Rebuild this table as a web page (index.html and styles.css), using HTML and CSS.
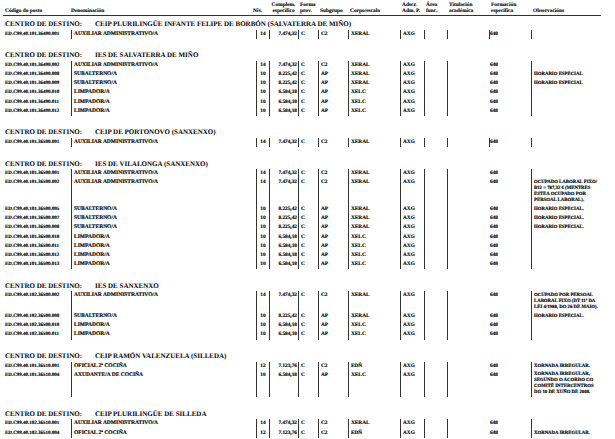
FILE: index.html
```html
<!DOCTYPE html>
<html lang="gl">
<head>
<meta charset="utf-8">
<title>Postos</title>
<link rel="stylesheet" href="styles.css">
</head>
<body>
<div class="page">
  <div class="head cols">
    <div class="h"><span></span><span>Código do posto</span></div>
    <div class="h"><span></span><span>Denominación</span></div>
    <div class="h hn"><span></span><span>Niv.</span></div>
    <div class="h hc"><span>Complem.</span><span>específico</span></div>
    <div class="h hp"><span>Forma</span><span>prov.</span></div>
    <div class="h hp"><span></span><span>Subgrupo</span></div>
    <div class="h hp"><span></span><span>Corpo/escala</span></div>
    <div class="h hp"><span>Adscr.</span><span>Adm. P.</span></div>
    <div class="h hp"><span>Área</span><span>func.</span></div>
    <div class="h hp"><span>Titulación</span><span>académica</span></div>
    <div class="h hp"><span>Formación</span><span>específica</span></div>
    <div class="h hp"><span></span><span>Observacións</span></div>
  </div>

  <section class="sec first fbar">
    <h2 class="title"><span class="lbl">CENTRO DE DESTINO:</span>CEIP PLURILINGÜE INFANTE FELIPE DE BORBÓN (SALVATERRA DE MIÑO)</h2>
    <div class="row cols"><div class="k">ED.C99.40.101.36490.001</div><div class="b d">AUXILIAR ADMINISTRATIVO/A</div><div class="b n">14</div><div class="b r">7.474,32</div><div class="b">C</div><div class="b">C2</div><div class="b">XERAL</div><div class="b">AXG</div><div class="b"></div><div class="b"></div><div class="f">648</div><div class="b o"></div></div>
  </section>

  <section class="sec">
    <h2 class="title"><span class="lbl">CENTRO DE DESTINO:</span>IES DE SALVATERRA DE MIÑO</h2>
    <div class="row cols"><div class="k">ED.C99.40.101.36490.002</div><div class="b d">AUXILIAR ADMINISTRATIVO/A</div><div class="b n">14</div><div class="b r">7.474,32</div><div class="b">C</div><div class="b">C2</div><div class="b">XERAL</div><div class="b">AXG</div><div class="b"></div><div class="b"></div><div class="f">648</div><div class="b o"></div></div>
    <div class="row cols"><div class="k">ED.C99.40.101.36490.008</div><div class="b d">SUBALTERNO/A</div><div class="b n">10</div><div class="b r">8.225,42</div><div class="b">C</div><div class="b">AP</div><div class="b">XERAL</div><div class="b">AXG</div><div class="b"></div><div class="b"></div><div class="f">648</div><div class="b o">HORARIO ESPECIAL</div></div>
    <div class="row cols"><div class="k">ED.C99.40.101.36490.009</div><div class="b d">SUBALTERNO/A</div><div class="b n">10</div><div class="b r">8.225,42</div><div class="b">C</div><div class="b">AP</div><div class="b">XERAL</div><div class="b">AXG</div><div class="b"></div><div class="b"></div><div class="f">648</div><div class="b o">HORARIO ESPECIAL</div></div>
    <div class="row cols"><div class="k">ED.C99.40.101.36490.010</div><div class="b d">LIMPADOR/A</div><div class="b n">10</div><div class="b r">6.584,18</div><div class="b">C</div><div class="b">AP</div><div class="b">XELC</div><div class="b">AXG</div><div class="b"></div><div class="b"></div><div class="f">648</div><div class="b o"></div></div>
    <div class="row cols"><div class="k">ED.C99.40.101.36490.011</div><div class="b d">LIMPADOR/A</div><div class="b n">10</div><div class="b r">6.584,18</div><div class="b">C</div><div class="b">AP</div><div class="b">XELC</div><div class="b">AXG</div><div class="b"></div><div class="b"></div><div class="f">648</div><div class="b o"></div></div>
    <div class="row cols"><div class="k">ED.C99.40.101.36490.012</div><div class="b d">LIMPADOR/A</div><div class="b n">10</div><div class="b r">6.584,18</div><div class="b">C</div><div class="b">AP</div><div class="b">XELC</div><div class="b">AXG</div><div class="b"></div><div class="b"></div><div class="f">648</div><div class="b o"></div></div>
  </section>

  <section class="sec fbar">
    <h2 class="title"><span class="lbl">CENTRO DE DESTINO:</span>CEIP DE PORTONOVO (SANXENXO)</h2>
    <div class="row cols"><div class="k">ED.C99.40.101.36500.001</div><div class="b d">AUXILIAR ADMINISTRATIVO/A</div><div class="b n">14</div><div class="b r">7.474,32</div><div class="b">C</div><div class="b">C2</div><div class="b">XERAL</div><div class="b">AXG</div><div class="b"></div><div class="b"></div><div class="f">648</div><div class="b o"></div></div>
  </section>

  <section class="sec">
    <h2 class="title"><span class="lbl">CENTRO DE DESTINO:</span>IES DE VILALONGA (SANXENXO)</h2>
    <div class="row cols"><div class="k">ED.C99.40.101.36500.001</div><div class="b d">AUXILIAR ADMINISTRATIVO/A</div><div class="b n">14</div><div class="b r">7.474,32</div><div class="b">C</div><div class="b">C2</div><div class="b">XERAL</div><div class="b">AXG</div><div class="b"></div><div class="b"></div><div class="f">648</div><div class="b o"></div></div>
    <div class="row cols"><div class="k">ED.C99.40.101.36500.002</div><div class="b d">AUXILIAR ADMINISTRATIVO/A</div><div class="b n">14</div><div class="b r">7.474,32</div><div class="b">C</div><div class="b">C2</div><div class="b">XERAL</div><div class="b">AXG</div><div class="b"></div><div class="b"></div><div class="f">648</div><div class="b o ml">OCUPADO LABORAL FIXO/<br>B12 = 787,32 € (MENTRES<br>ESTEA OCUPADO POR<br>PERSOAL LABORAL).</div></div>
    <div class="row cols"><div class="k">ED.C99.40.101.36500.005</div><div class="b d">SUBALTERNO/A</div><div class="b n">10</div><div class="b r">8.225,42</div><div class="b">C</div><div class="b">AP</div><div class="b">XERAL</div><div class="b">AXG</div><div class="b"></div><div class="b"></div><div class="f">648</div><div class="b o">HORARIO ESPECIAL.</div></div>
    <div class="row cols"><div class="k">ED.C99.40.101.36500.007</div><div class="b d">SUBALTERNO/A</div><div class="b n">10</div><div class="b r">8.225,42</div><div class="b">C</div><div class="b">AP</div><div class="b">XERAL</div><div class="b">AXG</div><div class="b"></div><div class="b"></div><div class="f">648</div><div class="b o">HORARIO ESPECIAL.</div></div>
    <div class="row cols"><div class="k">ED.C99.40.101.36500.008</div><div class="b d">SUBALTERNO/A</div><div class="b n">10</div><div class="b r">8.225,42</div><div class="b">C</div><div class="b">AP</div><div class="b">XERAL</div><div class="b">AXG</div><div class="b"></div><div class="b"></div><div class="f">648</div><div class="b o">HORARIO ESPECIAL.</div></div>
    <div class="row cols"><div class="k">ED.C99.40.101.36500.010</div><div class="b d">LIMPADOR/A</div><div class="b n">10</div><div class="b r">6.584,18</div><div class="b">C</div><div class="b">AP</div><div class="b">XELC</div><div class="b">AXG</div><div class="b"></div><div class="b"></div><div class="f">648</div><div class="b o"></div></div>
    <div class="row cols"><div class="k">ED.C99.40.101.36500.011</div><div class="b d">LIMPADOR/A</div><div class="b n">10</div><div class="b r">6.584,18</div><div class="b">C</div><div class="b">AP</div><div class="b">XELC</div><div class="b">AXG</div><div class="b"></div><div class="b"></div><div class="f">648</div><div class="b o"></div></div>
    <div class="row cols"><div class="k">ED.C99.40.101.36500.012</div><div class="b d">LIMPADOR/A</div><div class="b n">10</div><div class="b r">6.584,18</div><div class="b">C</div><div class="b">AP</div><div class="b">XELC</div><div class="b">AXG</div><div class="b"></div><div class="b"></div><div class="f">648</div><div class="b o"></div></div>
    <div class="row cols"><div class="k">ED.C99.40.101.36500.013</div><div class="b d">LIMPADOR/A</div><div class="b n">10</div><div class="b r">6.584,18</div><div class="b">C</div><div class="b">AP</div><div class="b">XELC</div><div class="b">AXG</div><div class="b"></div><div class="b"></div><div class="f">648</div><div class="b o"></div></div>
  </section>

  <section class="sec">
    <h2 class="title"><span class="lbl">CENTRO DE DESTINO:</span>IES DE SANXENXO</h2>
    <div class="row cols"><div class="k">ED.C99.40.102.36500.002</div><div class="b d">AUXILIAR ADMINISTRATIVO/A</div><div class="b n">14</div><div class="b r">7.474,32</div><div class="b">C</div><div class="b">C2</div><div class="b">XERAL</div><div class="b">AXG</div><div class="b"></div><div class="b"></div><div class="f">648</div><div class="b o ml">OCUPADO POR PERSOAL<br>LABORAL FIXO (DT 11ª DA<br>LEI 4/1988, DO 26 DE MAIO).</div></div>
    <div class="row cols"><div class="k">ED.C99.40.102.36500.008</div><div class="b d">SUBALTERNO/A</div><div class="b n">10</div><div class="b r">8.225,42</div><div class="b">C</div><div class="b">AP</div><div class="b">XERAL</div><div class="b">AXG</div><div class="b"></div><div class="b"></div><div class="f">648</div><div class="b o">HORARIO ESPECIAL.</div></div>
    <div class="row cols"><div class="k">ED.C99.40.102.36500.010</div><div class="b d">LIMPADOR/A</div><div class="b n">10</div><div class="b r">6.584,18</div><div class="b">C</div><div class="b">AP</div><div class="b">XELC</div><div class="b">AXG</div><div class="b"></div><div class="b"></div><div class="f">648</div><div class="b o"></div></div>
    <div class="row cols"><div class="k">ED.C99.40.102.36500.011</div><div class="b d">LIMPADOR/A</div><div class="b n">10</div><div class="b r">6.584,18</div><div class="b">C</div><div class="b">AP</div><div class="b">XELC</div><div class="b">AXG</div><div class="b"></div><div class="b"></div><div class="f">648</div><div class="b o"></div></div>
  </section>

  <section class="sec">
    <h2 class="title"><span class="lbl">CENTRO DE DESTINO:</span>CEIP RAMÓN VALENZUELA (SILLEDA)</h2>
    <div class="row cols"><div class="k">ED.C99.40.101.36510.001</div><div class="b d">OFICIAL 2ª COCIÑA</div><div class="b n">12</div><div class="b r">7.123,76</div><div class="b">C</div><div class="b">C2</div><div class="b">EDÑ</div><div class="b">AXG</div><div class="b"></div><div class="b"></div><div class="f">648</div><div class="b o">XORNADA IRREGULAR.</div></div>
    <div class="row cols"><div class="k">ED.C99.40.101.36510.004</div><div class="b d">AXUDANTE/A DE COCIÑA</div><div class="b n">10</div><div class="b r">6.584,18</div><div class="b">C</div><div class="b">AP</div><div class="b">XELC</div><div class="b">AXG</div><div class="b"></div><div class="b"></div><div class="f">648</div><div class="b o ml">XORNADA IRREGULAR,<br>SEGUNDO O ACORDO CO<br>COMITÉ INTERCENTROS<br>DO 10 DE XUÑO DE 2008.</div></div>
  </section>

  <section class="sec">
    <h2 class="title"><span class="lbl">CENTRO DE DESTINO:</span>CEIP PLURILINGÜE DE SILLEDA</h2>
    <div class="row cols"><div class="k">ED.C99.40.102.36510.001</div><div class="b d">AUXILIAR ADMINISTRATIVO/A</div><div class="b n">14</div><div class="b r">7.474,32</div><div class="b">C</div><div class="b">C2</div><div class="b">XERAL</div><div class="b">AXG</div><div class="b"></div><div class="b"></div><div class="f">648</div><div class="b o"></div></div>
    <div class="row cols"><div class="k">ED.C99.40.102.36510.004</div><div class="b d">OFICIAL 2ª COCIÑA</div><div class="b n">12</div><div class="b r">7.123,76</div><div class="b">C</div><div class="b">C2</div><div class="b">EDÑ</div><div class="b">AXG</div><div class="b"></div><div class="b"></div><div class="f">648</div><div class="b o">XORNADA IRREGULAR.</div></div>
  </section>
</div>
</body>
</html>
```

FILE: styles.css
```css
html, body {
  margin: 0;
  padding: 0;
  background: #ffffff;
}

body {
  font-family: "Liberation Serif", "Times New Roman", serif;
  font-weight: bold;
  color: #000000;
  overflow: hidden;
  text-rendering: geometricPrecision;
}

.page {
  padding-left: 5px;
  width: 596px;
}

.cols {
  display: grid;
  grid-template-columns: 66px 185px 13px 29px 20px 30px 52px 24px 23px 42px 42px 70px;
}

/* header */
.head {
  font-size: 5.4px;
  line-height: 6.5px;
  padding-top: 1.5px;
  border-bottom: 1.5px solid #333333;
  margin-left: -2px;
  padding-left: 2px;
  -webkit-text-stroke: 0.12px #000000;
}

.h {
  display: flex;
  flex-direction: column;
  white-space: nowrap;
}

.h span {
  height: 6.5px;
}

.hn {
  margin-left: -3px;
}

.hc {
  align-items: center;
}

.hp {
  padding-left: 2px;
}

/* section title */
.title {
  margin: 0;
  font-size: 7px;
  line-height: 9px;
  font-weight: bold;
  padding-top: 12.4px;
  padding-bottom: 0.6px;
  white-space: nowrap;
}

.first .title {
  padding-top: 4.5px;
}

.lbl {
  display: inline-block;
  width: 90px;
}

/* rows */
.row > div {
  font-size: 5.3px;
  line-height: 7.2px;
  padding: 1px 0 1px 2px;
  white-space: nowrap;
  -webkit-text-stroke: 0.15px #000000;
}

.row > div.k {
  font-size: 5px;
  padding-left: 0;
}

.row > div.d {
  font-size: 5.5px;
}

.row > div.b {
  border-left: 1px solid #333333;
}

.row > div.n {
  text-align: center;
  padding-left: 0;
}

.row > div.r {
  text-align: right;
  padding-right: 1px;
  padding-left: 0;
}

.row > div.f {
  padding-left: 1px;
}

.fbar .row > div.f {
  border-left: 1px solid #333333;
  padding-left: 0;
}

.row > div.o {
  font-size: 4.8px;
  padding-left: 2px;
}

.row > div.ml {
  line-height: 6px;
  padding-top: 1.6px;
}
```
